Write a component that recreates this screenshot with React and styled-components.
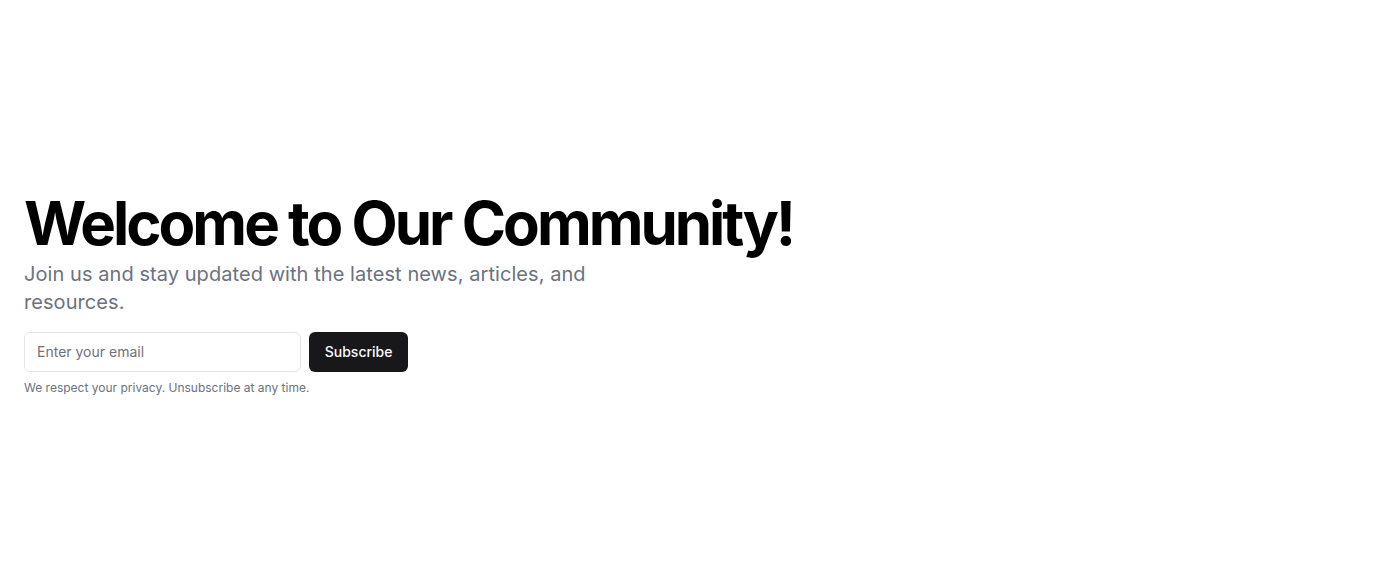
import React from 'react';
import styled, { createGlobalStyle } from 'styled-components';

const Global = createGlobalStyle`
  * { box-sizing: border-box; }
  html, body { margin: 0; padding: 0; background: #fff; }
  body { font-family: Inter, "Noto Sans", sans-serif; color: #09090b; }
`;

export default function App() {
  return (
    <>
      <Global />
      <Section>
        <Wrapper>
          <Heading>Welcome to Our Community!</Heading>
          <Lead>Join us and stay updated with the latest news, articles, and resources.</Lead>
          <FormBlock>
            <Form onSubmit={(e) => e.preventDefault()}>
              <EmailInput type="email" placeholder="Enter your email" />
              <SubscribeButton type="submit">Subscribe</SubscribeButton>
            </Form>
            <Note>We respect your privacy. Unsubscribe at any time.</Note>
          </FormBlock>
        </Wrapper>
      </Section>
    </>
  );
}

const Section = styled.section`
  min-height: 588px;
  display: flex;
  align-items: center;
  width: 100%;
`;
const Wrapper = styled.div`
  padding: 0 24px;
  display: flex;
  flex-direction: column;
  align-items: flex-start;
`;
const Heading = styled.h1`
  margin: 0;
  font-size: 60px;
  line-height: 1;
  font-weight: 700;
  letter-spacing: -0.05em;
  color: #000;
`;
const Lead = styled.p`
  margin: 7px 0 0;
  max-width: 600px;
  font-size: 20px;
  line-height: 28px;
  letter-spacing: 0.065px;
  color: #6b7280;
`;
const FormBlock = styled.div`
  margin-top: 16px;
  width: 100%;
  max-width: 384px;
  display: flex;
  flex-direction: column;
  gap: 8px;
`;
const Form = styled.form`
  display: flex;
  gap: 8px;
`;
const EmailInput = styled.input`
  flex: 1;
  min-width: 0;
  height: 40px;
  padding: 8px 12px;
  border: 1px solid #e4e4e7;
  border-radius: 6px;
  font-family: inherit;
  font-size: 14px;
  color: #09090b;
  background: #fff;
  outline: none;
  &::placeholder { color: #71717a; }
`;
const SubscribeButton = styled.button`
  height: 40px;
  padding: 0 15.5px;
  border: 0;
  border-radius: 6px;
  background: #18181b;
  color: #fafafa;
  font-family: inherit;
  font-size: 14px;
  font-weight: 500;
  cursor: pointer;
`;
const Note = styled.p`
  margin: 0;
  font-size: 12px;
  line-height: 16px;
  color: #6b7280;
`;
